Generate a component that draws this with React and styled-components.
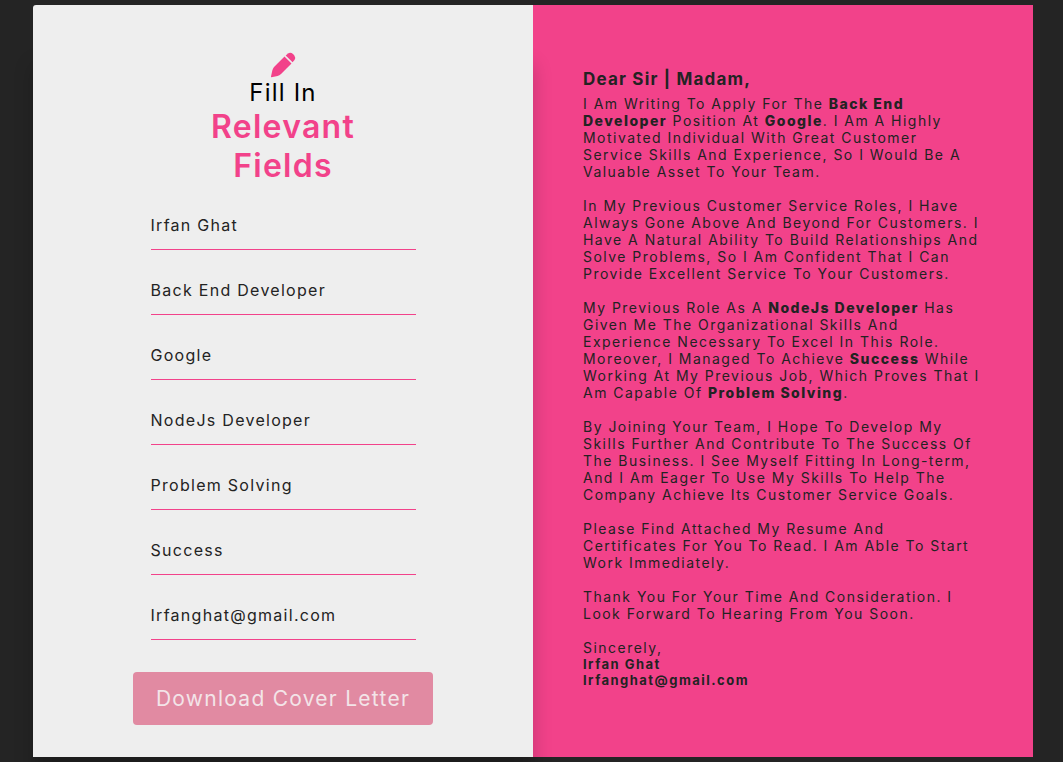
import React, { useState } from "react";
import styled, { createGlobalStyle } from "styled-components";

const PINK = "#f2428a";
const INK = "#232323";

const GlobalStyle = createGlobalStyle`
  *, *::before, *::after { box-sizing: border-box; margin: 0; padding: 0; }
  body {
    background: #242424;
    color: ${INK};
    font-family: Inter, "Liberation Sans", sans-serif;
  }
`;

const Page = styled.main`
  min-height: 100vh;
  display: flex;
  align-items: center;
  justify-content: center;
  padding: 5px 30px 5px 33px;
`;

const Card = styled.div`
  display: grid;
  grid-template-columns: 1fr 1fr;
  width: 100%;
  max-width: 1000px;
`;

const FormPanel = styled.form`
  position: relative;
  display: flex;
  flex-direction: column;
  align-items: center;
  padding: 47px 50px 32px;
  background: #eeeeee;
  border-radius: 3px 0 0 0;
  box-shadow: 0 60px 20px rgba(0, 0, 0, 0.2);
`;

const PencilIcon = styled.svg`
  width: 26px;
  height: 26px;
  fill: ${PINK};
`;

const Kicker = styled.p`
  color: #000;
  font-size: 24px;
  line-height: 29px;
  letter-spacing: 0.05em;
`;

const Title = styled.h1`
  width: 200px;
  color: ${PINK};
  font-size: 32px;
  font-weight: 600;
  line-height: 39px;
  letter-spacing: 0.04em;
  text-align: center;
`;

const Fields = styled.div`
  display: flex;
  flex-direction: column;
  gap: 15px;
  width: 265px;
  margin-top: 15px;
`;

const Field = styled.input`
  width: 100%;
  height: 50px;
  padding-top: 1px;
  border: 0;
  border-bottom: 1px solid ${PINK};
  outline: 0;
  background: transparent;
  color: ${INK};
  font: 400 16px/20px Inter, "Liberation Sans", sans-serif;
  letter-spacing: 0.08em;
`;

const DownloadButton = styled.button`
  width: 300px;
  height: 53px;
  margin-top: 32px;
  padding-top: 1px;
  border: 0;
  border-radius: 4px;
  background: #e18aa2;
  color: #f3e4e8;
  font: 400 21px/26px Inter, "Liberation Sans", sans-serif;
  letter-spacing: 0.06em;
`;

const Letter = styled.article`
  padding: 64px 50px;
  background: ${PINK};
  font-size: 14px;
  font-weight: 400;
  line-height: 17px;
  letter-spacing: 0.105em;
`;

const Greeting = styled.h2`
  margin-bottom: 6px;
  font-size: 17px;
  font-weight: 700;
  line-height: 20px;
  letter-spacing: 0.07em;
`;

const Paragraph = styled.p`
  margin-bottom: 17px;
`;

const Strong = styled.b`
  font-weight: 800;
`;

const Signature = styled.p`
  font-size: 13px;
  font-weight: 700;
  line-height: 16px;
`;

const FIELDS = [
  ["name", "Your name", "Irfan Ghat"],
  ["position", "Position", "Back End Developer"],
  ["company", "Company", "Google"],
  ["previous", "Previous role", "NodeJs Developer"],
  ["skill", "Skill", "Problem Solving"],
  ["achievement", "Achievement", "Success"],
  ["email", "Email", "Irfanghat@gmail.com"],
];

export default function App() {
  const [values, setValues] = useState(
    Object.fromEntries(FIELDS.map(([key, , value]) => [key, value]))
  );

  return (
    <Page>
      <GlobalStyle />
      <Card>
        <FormPanel onSubmit={(e) => e.preventDefault()}>
          <PencilIcon viewBox="0 0 26 26" aria-hidden="true">
            <path d="M14.500 4.500 L21.500 11.500 L11 22 Q9.500 23.500 7.500 23.900 L1.500 25.200 Q.9 25.300 1 24.500 L2.300 18.500 Q2.800 16.500 4 15 Z" />
            <path d="M15.700 3.400 L18 1.500 Q20.500 0 23 2 L24.200 3.200 Q26 5.500 24.500 8 L22.600 10.300 Z" />
          </PencilIcon>
          <Kicker>Fill In</Kicker>
          <Title>Relevant Fields</Title>
          <Fields>
            {FIELDS.map(([key, label]) => (
              <Field
                key={key}
                name={key}
                aria-label={label}
                value={values[key]}
                onChange={(e) => setValues({ ...values, [key]: e.target.value })}
              />
            ))}
          </Fields>
          <DownloadButton type="submit">Download Cover Letter</DownloadButton>
        </FormPanel>
        <Letter>
          <Greeting>Dear Sir | Madam,</Greeting>
          <Paragraph>
            I Am Writing To Apply For The <Strong>{values.position}</Strong>{" "}
            Position At <Strong>{values.company}</Strong>. I Am A Highly
            Motivated Individual With Great Customer Service Skills And
            Experience, So I Would Be A Valuable Asset To Your Team.
          </Paragraph>
          <Paragraph>
            In My Previous Customer Service Roles, I Have Always Gone Above And
            Beyond For Customers. I Have A Natural Ability To Build
            Relationships And Solve Problems, So I Am Confident That I Can
            Provide Excellent Service To Your Customers.
          </Paragraph>
          <Paragraph>
            My Previous Role As A <Strong>{values.previous}</Strong> Has Given
            Me The Organizational Skills And Experience Necessary To Excel In
            This Role. Moreover, I Managed To Achieve{" "}
            <Strong>{values.achievement}</Strong> While Working At My Previous
            Job, Which Proves That I Am Capable Of{" "}
            <Strong>{values.skill}</Strong>.
          </Paragraph>
          <Paragraph>
            By Joining Your Team, I Hope To Develop My Skills Further And
            Contribute To The Success Of The Business. I See Myself Fitting In
            Long-term, And I Am Eager To Use My Skills To Help The Company
            Achieve Its Customer Service Goals.
          </Paragraph>
          <Paragraph>
            Please Find Attached My Resume And Certificates For You To Read. I
            Am Able To Start Work Immediately.
          </Paragraph>
          <Paragraph>
            Thank You For Your Time And Consideration. I Look Forward To Hearing
            From You Soon.
          </Paragraph>
          <p>Sincerely,</p>
          <Signature>{values.name}</Signature>
          <Signature>{values.email}</Signature>
        </Letter>
      </Card>
    </Page>
  );
}
